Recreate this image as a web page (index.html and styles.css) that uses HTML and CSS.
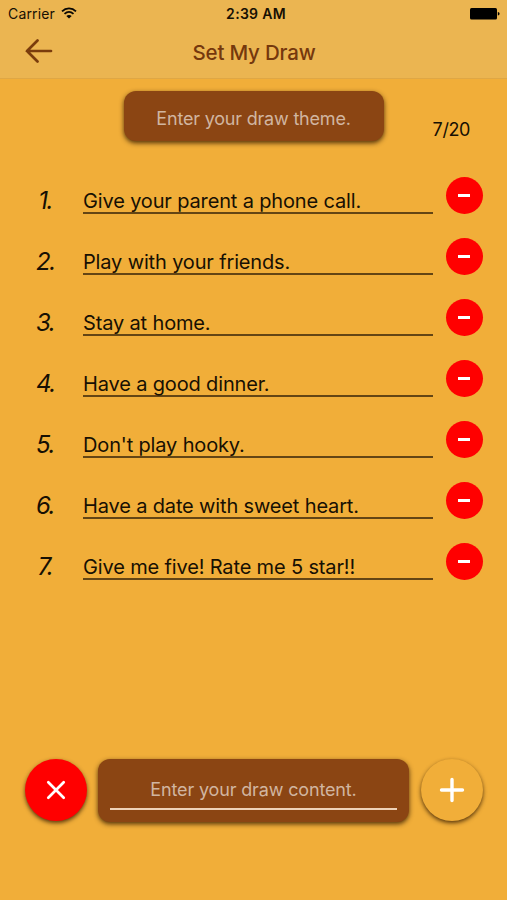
FILE: index.html
```html
<!DOCTYPE html>
<html lang="en">
<head>
    <meta charset="UTF-8">
    <meta name="viewport" content="width=device-width, initial-scale=1.0">
    <title>Set My Draw</title>
    <link rel="stylesheet" href="styles.css">
</head>
<body>

<header class="header">
    <div class="status">
        <div class="carrier">
            <span>Carrier</span>
            <svg class="wifi" width="16" height="12" viewBox="0 0 16 12">
                <path d="M1 4.300C5 .5 11 .5 15 4.300M3.500 6.900C6.200 4.500 9.800 4.500 12.500 6.900" fill="none" stroke="#0a0803" stroke-width="1.800"/>
                <path d="M8 11.600L5.300 8.900Q8 6.900 10.700 8.900Z" fill="#0a0803"/>
            </svg>
        </div>
        <div class="time">2:39 AM</div>
        <div class="battery">
            <svg width="30" height="12" viewBox="0 0 30 12">
                <rect x="0" y="0" width="27" height="11.500" rx="1.500"/>
                <path d="M27.800 4Q29.600 4.300 29.600 5.800T27.800 7.600Z"/>
            </svg>
        </div>
    </div>
    <div class="nav">
        <svg class="back" width="28" height="24" viewBox="0 0 28 24">
            <path d="M26 12H2M12.500 1.500L2 12L12.500 22.500" fill="none" stroke="#7a3c0c" stroke-width="2.700" stroke-linecap="round"/>
        </svg>
        <h1 class="title">Set My Draw</h1>
    </div>
</header>

<div class="top">
    <div class="theme">Enter your draw theme.</div>
    <div class="count">7/20</div>
</div>

<ul class="list">
    <li class="item">
        <span class="num">1.</span>
        <span class="text">Give your parent a phone call.</span>
        <span class="remove"></span>
    </li>
    <li class="item">
        <span class="num">2.</span>
        <span class="text">Play with your friends.</span>
        <span class="remove"></span>
    </li>
    <li class="item">
        <span class="num">3.</span>
        <span class="text">Stay at home.</span>
        <span class="remove"></span>
    </li>
    <li class="item">
        <span class="num">4.</span>
        <span class="text">Have a good dinner.</span>
        <span class="remove"></span>
    </li>
    <li class="item">
        <span class="num">5.</span>
        <span class="text">Don't play hooky.</span>
        <span class="remove"></span>
    </li>
    <li class="item">
        <span class="num">6.</span>
        <span class="text">Have a date with sweet heart.</span>
        <span class="remove"></span>
    </li>
    <li class="item">
        <span class="num">7.</span>
        <span class="text">Give me five! Rate me 5 star!!</span>
        <span class="remove"></span>
    </li>
</ul>

<div class="bottom">
    <div class="round clear">
        <svg width="20" height="20" viewBox="0 0 20 20">
            <path d="M2.300 2.300L17.700 17.700M17.700 2.300L2.300 17.700" stroke="#fff" stroke-width="2.700" stroke-linecap="round"/>
        </svg>
    </div>
    <div class="content">
        <div class="content-input">Enter your draw content.</div>
    </div>
    <div class="round add">
        <svg width="26" height="26" viewBox="0 0 26 26">
            <path d="M13 2.500V23.500M2.500 13H23.500" stroke="#fff" stroke-width="3.400" stroke-linecap="round"/>
        </svg>
    </div>
</div>

</body>
</html>
```
FILE: styles.css
```css
html,
body
{
    margin:0;
    height:100%;
}
body{
    display:flex;
    flex-direction:column;
    background:#f1ae39;
    color:#171003;
    font-family:Inter, "Liberation Sans", sans-serif;
    overflow:hidden;
}

/* header */
.header{
    box-sizing:border-box;
    height:79px;
    background:#ebb551;
    border-bottom:1px solid #dfa745;
}
.status{
    display:grid;
    grid-template-columns:1fr auto 1fr;
    align-items:center;
    height:27px;
    padding:0 7px 0 8px;
    font-size:14px;
}
.carrier{
    display:flex;
    align-items:center;
    gap:6px;
    letter-spacing:0.15px;
}
.wifi{
    margin-top:-2px;
}
.time{
    font-weight:600;
    letter-spacing:0.3px;
    margin-left:4px;
}
.battery{
    display:flex;
    justify-content:flex-end;
}
.nav{
    display:grid;
    grid-template-columns:1fr auto 1fr;
    align-items:center;
    height:48px;
    padding:0 24px 0 25px;
}
.title{
    margin:2px 0 0;
    color:#75380d;
    font-size:20.5px;
    font-weight:550;
    letter-spacing:-0.2px;
}

/* theme and counter */
.top{
    display:grid;
    grid-template-columns:1fr 260px 1fr;
    height:50px;
    margin-top:12px;
}
.theme{
    grid-column:2;
    height:50px;
    border-radius:12px;
    background:#8b4513;
    box-shadow:0 2px 5px rgba(50, 25, 0, 0.85);
    color:#d1b5a0;
    font-size:18px;
    line-height:55px;
    letter-spacing:-0.2px;
    text-align:center;
}
.count{
    padding:26px 37px 0 0;
    font-size:18px;
    letter-spacing:-0.4px;
    line-height:26px;
    text-align:right;
}

/* list */
.list{
    display:flex;
    flex-direction:column;
    gap:24px;
    list-style:none;
    margin:36px 24px 0 36px;
    padding:0;
}
.item{
    display:grid;
    grid-template-columns:47px 350px 37px;
    height:37px;
}
.num{
    width:18px;
    font-size:24px;
    font-style:italic;
    line-height:47px;
    letter-spacing:-1.5px;
    text-align:center;
}
.text{
    box-sizing:border-box;
    height:37px;
    border-bottom:2px solid #644514;
    font-size:20px;
    line-height:49px;
    letter-spacing:-0.15px;
    white-space:nowrap;
}
.remove{
    display:flex;
    align-items:center;
    justify-content:center;
    width:37px;
    height:37px;
    margin-left:12.5px;
    border-radius:50%;
    background:#ff0000;
}
.remove::before{
    content:"";
    width:12px;
    height:3px;
    background:#fff;
}

/* bottom bar */
.bottom{
    display:flex;
    margin:auto 24px 78px 25px;
}
.round{
    display:flex;
    align-items:center;
    justify-content:center;
    width:62px;
    height:62px;
    border-radius:50%;
    box-shadow:0 2px 4px rgba(50, 25, 0, 0.8);
}
.clear{
    background:#ff0000;
}
.add{
    background:#f1ae39;
}
.content{
    box-sizing:border-box;
    width:311px;
    height:63px;
    margin:0 12px 0 11px;
    padding:0 12px;
    border-radius:12px;
    background:#8b4513;
    box-shadow:0 2px 5px rgba(50, 25, 0, 0.85);
}
.content-input{
    height:49px;
    border-bottom:2px solid #eed2b8;
    color:#d1b5a0;
    font-size:18px;
    line-height:62px;
    letter-spacing:-0.15px;
    text-align:center;
}
```
